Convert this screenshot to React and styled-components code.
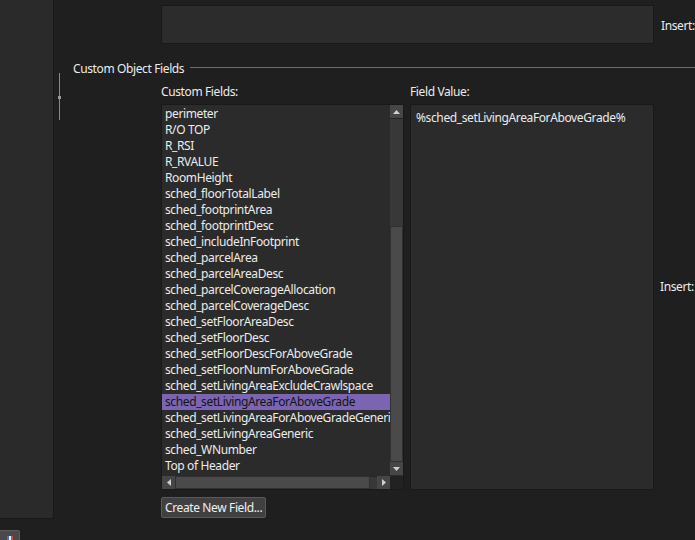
import React from 'react';
import styled, { createGlobalStyle } from 'styled-components';

const fields = [
  'perimeter',
  'R/O TOP',
  'R_RSI',
  'R_RVALUE',
  'RoomHeight',
  'sched_floorTotalLabel',
  'sched_footprintArea',
  'sched_footprintDesc',
  'sched_includeInFootprint',
  'sched_parcelArea',
  'sched_parcelAreaDesc',
  'sched_parcelCoverageAllocation',
  'sched_parcelCoverageDesc',
  'sched_setFloorAreaDesc',
  'sched_setFloorDesc',
  'sched_setFloorDescForAboveGrade',
  'sched_setFloorNumForAboveGrade',
  'sched_setLivingAreaExcludeCrawlspace',
  'sched_setLivingAreaForAboveGrade',
  'sched_setLivingAreaForAboveGradeGeneric',
  'sched_setLivingAreaGeneric',
  'sched_WNumber',
  'Top of Header',
];

const GlobalStyle = createGlobalStyle`
  html, body {
    margin: 0;
    padding: 0;
    background: #1f1f1f;
    overflow: hidden;
  }
  body {
    font-family: "Noto Sans", "Open Sans", sans-serif;
    font-size: 12px;
    letter-spacing: -0.38px;
    color: #ececec;
  }
`;

function App() {
  const selected = 'sched_setLivingAreaForAboveGrade';

  return (
    <>
      <GlobalStyle />
      <Page>
        <LeftColumn>
          <SidePanel />
          <CornerButton>
            <svg width="6" height="8" viewBox="0 0 6 8">
              <rect x="0" y="0" width="2" height="8" fill="#3f6fd8" />
              <rect x="2" y="0" width="2" height="8" fill="#f2f2f2" />
              <rect x="4" y="0" width="2" height="8" fill="#d8453f" />
            </svg>
          </CornerButton>
        </LeftColumn>

        <Content>
          <TopRow>
            <TextArea />
            <InsertLabel offset={13}>Insert:</InsertLabel>
          </TopRow>

          <Group>
            <Gutter>
              <Grip>
                <GripDot />
              </Grip>
            </Gutter>

            <GroupBody>
              <GroupHeader>
                <span>Custom Object Fields</span>
                <Rule />
              </GroupHeader>

              <FieldGrid>
                <Label>Custom Fields:</Label>
                <Label>Field Value:</Label>
                <span />

                <ListBox>
                  <Rows>
                    {fields.map((f) => (
                      <Row key={f} selected={f === selected}>
                        {f}
                      </Row>
                    ))}
                  </Rows>

                  <VScroll>
                    <ScrollButton>
                      <svg width="7" height="4" viewBox="0 0 7 4">
                        <path d="M0 4 L3.5 0 L7 4 Z" fill="#cfcfcf" />
                      </svg>
                    </ScrollButton>
                    <Track grow={107} />
                    <Thumb grow={234} />
                    <ScrollButton>
                      <svg width="7" height="4" viewBox="0 0 7 4">
                        <path d="M0 0 L3.5 4 L7 0 Z" fill="#cfcfcf" />
                      </svg>
                    </ScrollButton>
                  </VScroll>

                  <HScroll>
                    <ScrollButton>
                      <svg width="4" height="7" viewBox="0 0 4 7">
                        <path d="M4 0 L0 3.5 L4 7 Z" fill="#cfcfcf" />
                      </svg>
                    </ScrollButton>
                    <Thumb grow={191} />
                    <Track grow={7} />
                    <ScrollButton>
                      <svg width="4" height="7" viewBox="0 0 4 7">
                        <path d="M0 0 L4 3.5 L0 7 Z" fill="#cfcfcf" />
                      </svg>
                    </ScrollButton>
                  </HScroll>

                  <Corner />
                </ListBox>

                <ValueBox>%sched_setLivingAreaForAboveGrade%</ValueBox>
                <InsertLabel offset={175}>Insert:</InsertLabel>

                <ButtonCell>
                  <Button>Create New Field...</Button>
                </ButtonCell>
              </FieldGrid>
            </GroupBody>
          </Group>
        </Content>
      </Page>
    </>
  );
}

export default App;

const Page = styled.div`
  display: flex;
  width: 695px;
  height: 540px;
  overflow: hidden;
  background: #1f1f1f;
`;

const LeftColumn = styled.div`
  display: flex;
  flex-direction: column;
  width: 54px;
  flex-shrink: 0;
`;

const SidePanel = styled.div`
  height: 518px;
  flex-shrink: 0;
  background: #2a2a2a;
  border-right: 1px solid #191919;
  border-bottom: 1px solid #191919;
`;

const CornerButton = styled.div`
  margin-top: 11px;
  width: 20px;
  height: 20px;
  flex-shrink: 0;
  box-sizing: border-box;
  background: #4a4a4a;
  border: 1px solid #5c5c5c;
  border-left: none;
  border-radius: 0 2px 2px 0;
  display: flex;
  align-items: flex-start;
  justify-content: center;
  padding-top: 5px;
`;

const Content = styled.div`
  flex: 1;
  display: flex;
  flex-direction: column;
  padding-top: 5px;
  min-width: 0;
`;

const TopRow = styled.div`
  display: flex;
  padding-left: 107px;
  gap: 7px;
`;

const TextArea = styled.div`
  width: 493px;
  height: 39px;
  box-sizing: border-box;
  background: #2c2c2c;
  border: 1px solid #191919;
  flex-shrink: 0;
`;

const InsertLabel = styled.div`
  margin-top: ${(props) => props.offset}px;
  line-height: 16px;
  white-space: nowrap;
  align-self: start;
`;

const Group = styled.div`
  display: flex;
  margin-top: 17px;
`;

const Gutter = styled.div`
  width: 19px;
  flex-shrink: 0;
`;

const Grip = styled.div`
  position: relative;
  margin: 12px 0 0 5px;
  width: 1px;
  height: 47px;
  background: #8a8a8a;
`;

const GripDot = styled.div`
  position: absolute;
  left: -1px;
  top: 23px;
  width: 3px;
  height: 3px;
  background: #9a9a9a;
`;

const GroupBody = styled.div`
  flex: 1;
  min-width: 0;
`;

const GroupHeader = styled.div`
  display: flex;
  align-items: center;
  height: 16px;
  line-height: 16px;
  white-space: nowrap;
`;

const Rule = styled.div`
  flex: 1;
  height: 1px;
  margin-left: 6px;
  margin-top: -3px;
  background: #6e6e6e;
`;

const FieldGrid = styled.div`
  display: grid;
  grid-template-columns: 243px 244px auto;
  grid-template-rows: 16px 386px auto;
  column-gap: 6px;
  row-gap: 5px;
  margin-top: 6px;
  padding-left: 88px;
`;

const Label = styled.div`
  line-height: 16px;
  padding-top: 1px;
  white-space: nowrap;
`;

const ListBox = styled.div`
  display: grid;
  grid-template-columns: 228px 13px;
  grid-template-rows: 370px 14px;
  background: #2b2b2b;
  border: 1px solid #191919;
  overflow: hidden;
`;

const Rows = styled.div`
  overflow: hidden;
  padding-top: 1px;
`;

const Row = styled.div`
  height: 16px;
  line-height: 16px;
  padding-left: 3px;
  white-space: nowrap;
  overflow: hidden;
  color: ${(props) => (props.selected ? '#141414' : '#ececec')};
  background: ${(props) => (props.selected ? '#7b65b0' : 'transparent')};
`;

const VScroll = styled.div`
  display: flex;
  flex-direction: column;
  background: #363636;
  height: 370px;
`;

const HScroll = styled.div`
  display: flex;
  background: #363636;
  height: 13px;
  margin-top: 1px;
`;

const ScrollButton = styled.div`
  flex: 0 0 13px;
  height: 13px;
  min-width: 13px;
  display: flex;
  align-items: center;
  justify-content: center;
  background: #464646;
  box-sizing: border-box;
`;

const Track = styled.div`
  flex: ${(props) => props.grow} 1 0;
  background: #383838;
  border-top: 1px solid #242424;
`;

const Thumb = styled.div`
  flex: ${(props) => props.grow} 1 0;
  background: #4a4a4a;
  border: 1px solid #303030;
  box-sizing: border-box;
`;

const Corner = styled.div`
  background: #222222;
  margin-top: 1px;
`;

const ValueBox = styled.div`
  background: #2b2b2b;
  border: 1px solid #191919;
  padding: 5px 5px;
  line-height: 16px;
  white-space: nowrap;
  overflow: hidden;
`;

const ButtonCell = styled.div`
  grid-column: 1 / 2;
  padding-top: 2px;
`;

const Button = styled.div`
  display: inline-flex;
  align-items: center;
  height: 21px;
  box-sizing: border-box;
  padding: 0 3px;
  background: #404040;
  border: 1px solid #5a5a5a;
  border-radius: 2px;
  color: #f0f0f0;
  white-space: nowrap;
`;
